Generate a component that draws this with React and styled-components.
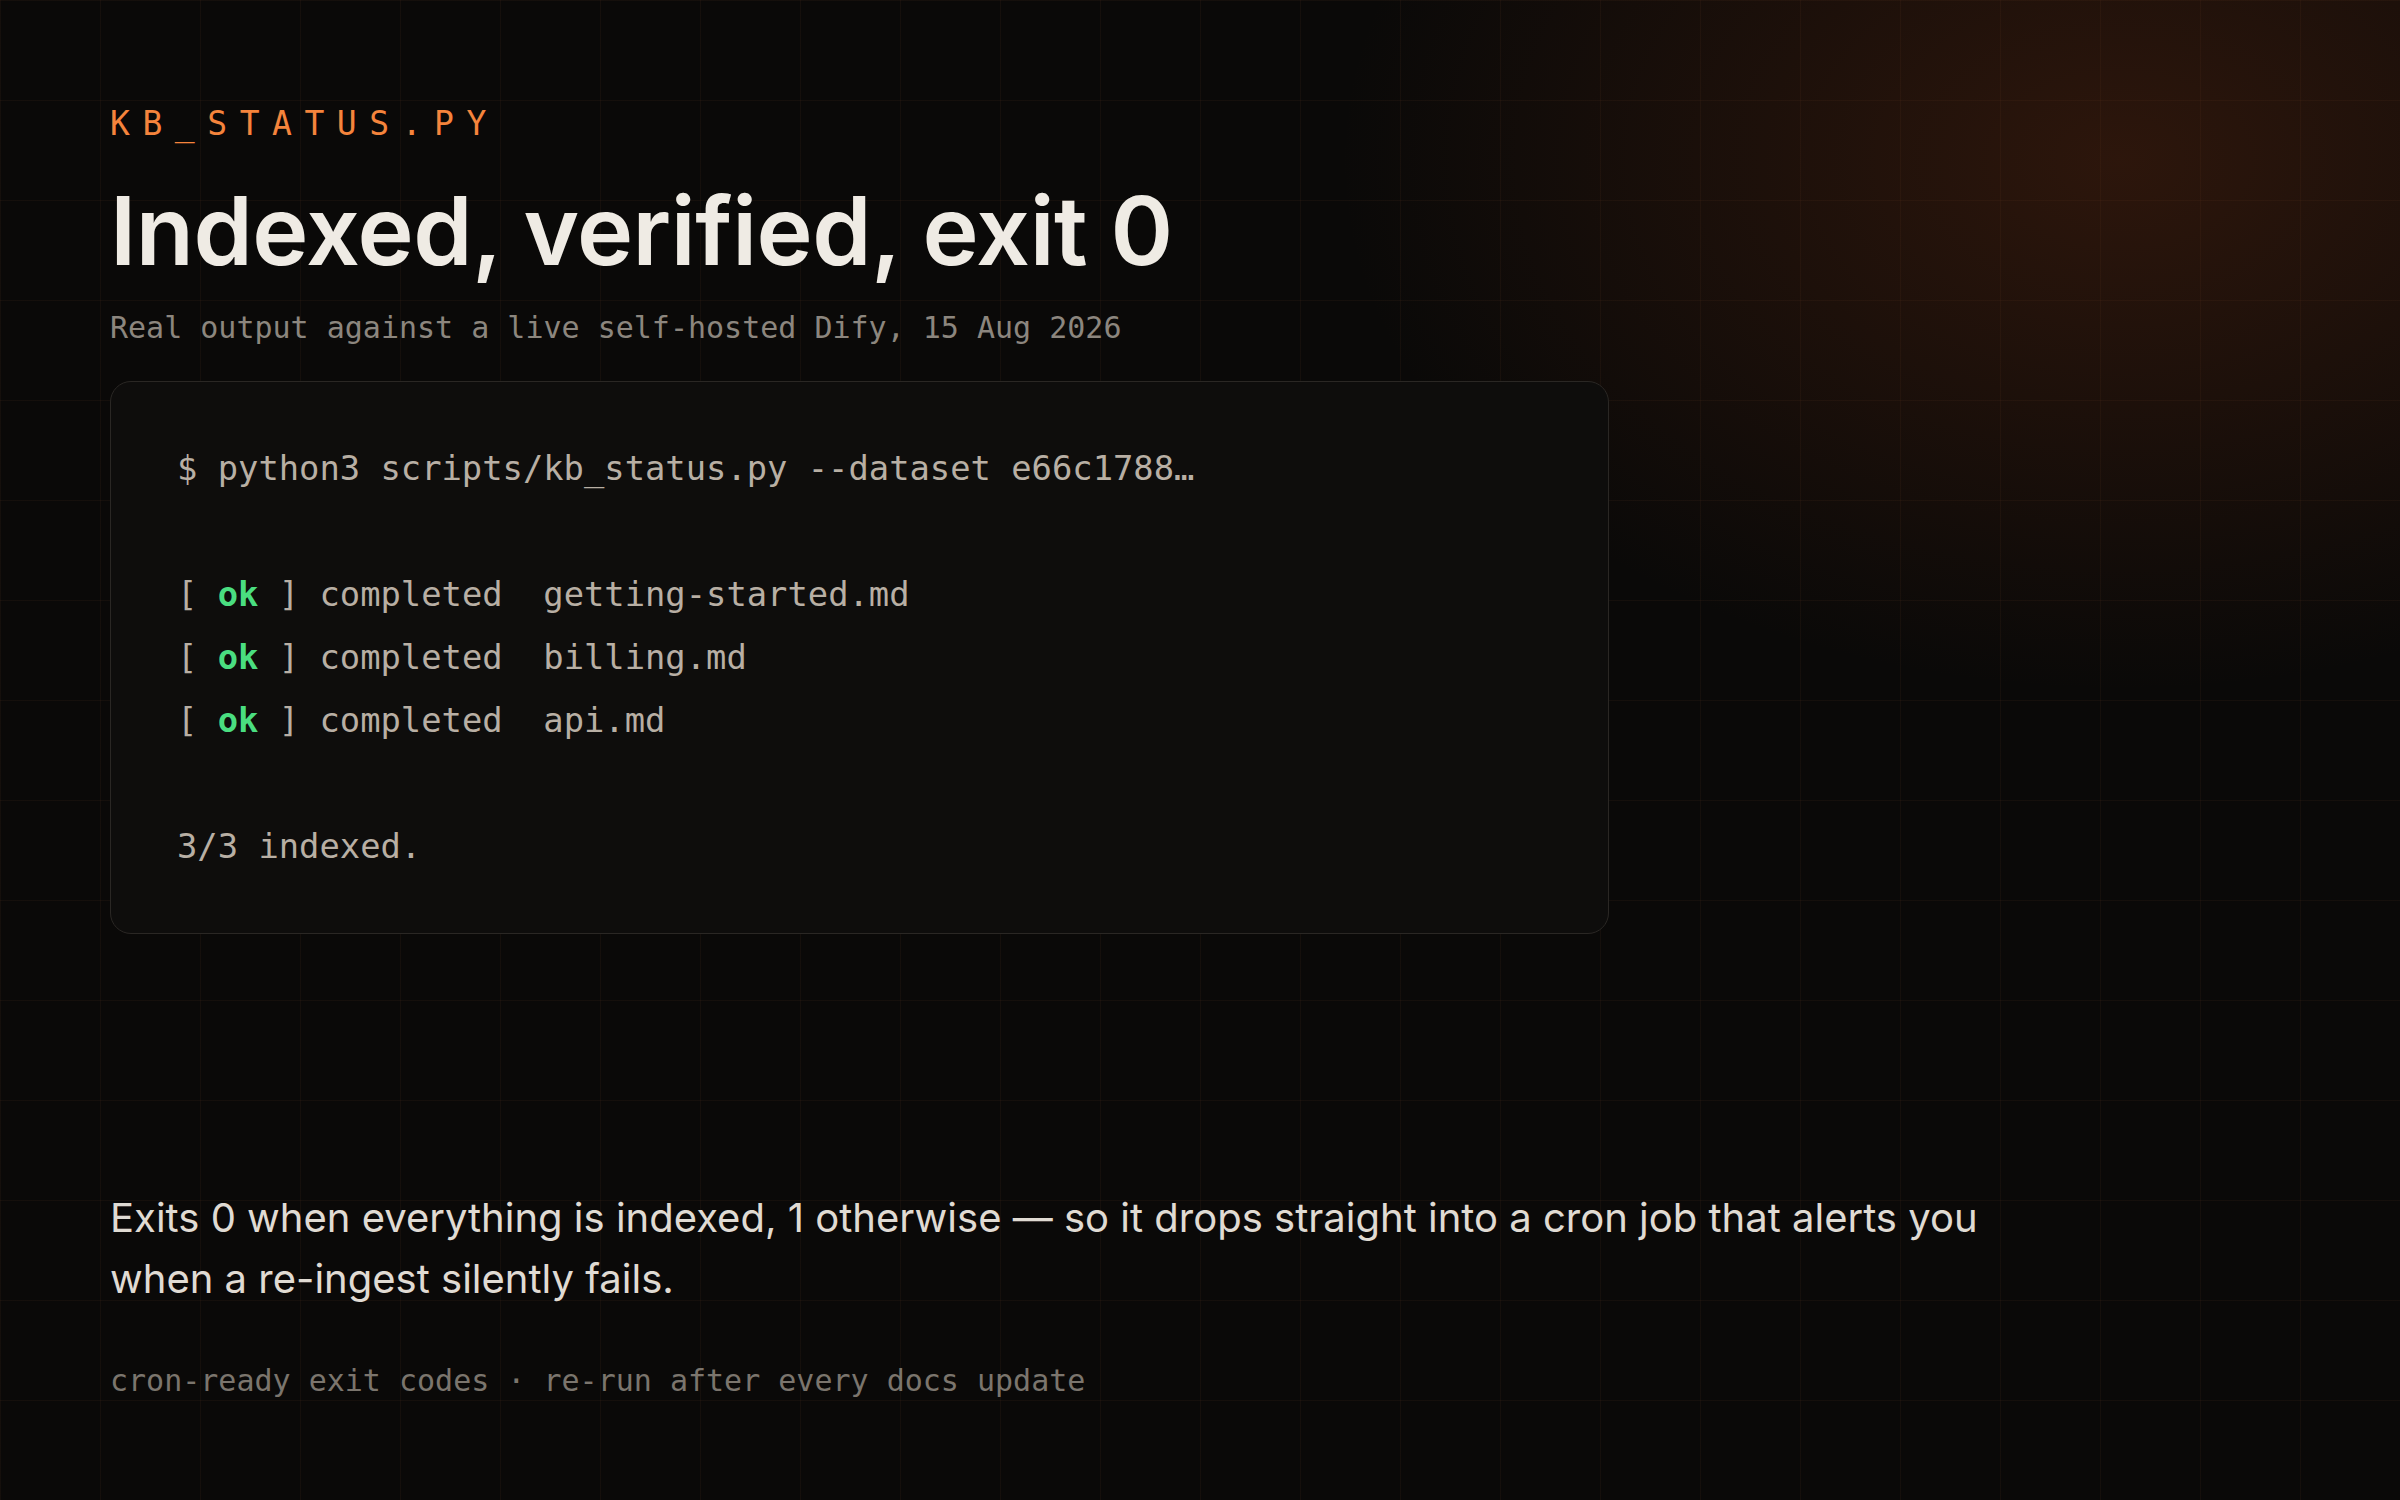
import React from 'react';
import styled, { createGlobalStyle } from 'styled-components';

const Colors = {
  page: '#0a0908',
  panel: '#0e0d0c',
  panelBorder: '#2a2724',
  title: '#efebe4',
  body: '#e0dbd3',
  accent: '#f5843c',
  muted: '#8c867e',
  faint: '#7b756d',
  term: '#b8afa4',
  ok: '#4ade80'
};

const Mono = '"DejaVu Sans Mono", "Liberation Mono", monospace';
const Sans = 'Inter, "Noto Sans", sans-serif';

const GlobalStyle = createGlobalStyle`
  html, body {
    margin: 0;
    padding: 0;
    background: ${Colors.page};
  }
  body {
    font-family: ${Sans};
    -webkit-font-smoothing: antialiased;
  }
`;

const Page = styled.main`
  box-sizing: border-box;
  min-height: 100vh;
  padding: 107px 110px 80px;
  display: flex;
  flex-direction: column;
  align-items: flex-start;
  background-color: ${Colors.page};
  background-image:
    radial-gradient(ellipse 1000px 680px at 2120px 160px, rgba(125, 52, 20, 0.3), rgba(125, 52, 20, 0.13) 45%, transparent 78%),
    linear-gradient(to right, rgba(255, 150, 90, 0.045) 1px, transparent 1px),
    linear-gradient(to bottom, rgba(255, 150, 90, 0.045) 1px, transparent 1px);
  background-size: 100% 100%, 100px 100px, 100px 100px;
`;

const Eyebrow = styled.div`
  font-family: ${Mono};
  font-size: 33px;
  line-height: 1;
  letter-spacing: 0.38em;
  color: ${Colors.accent};
`;

const Title = styled.h1`
  margin: 39px 0 0;
  font-family: ${Sans};
  font-size: 95px;
  font-weight: 600;
  line-height: 1.1;
  letter-spacing: -0.005em;
  color: ${Colors.title};
`;

const Caption = styled.p`
  margin: ${(props) => props.$top}px 0 0;
  font-family: ${Mono};
  font-size: 30px;
  line-height: 1.4;
  color: ${(props) => props.$color};
`;

const Terminal = styled.pre`
  box-sizing: border-box;
  width: 1499px;
  margin: 32px 0 0;
  padding: 55px 66px;
  background: ${Colors.panel};
  border: 1px solid ${Colors.panelBorder};
  border-radius: 21px;
  font-family: ${Mono};
  font-size: 33.8px;
  line-height: 63px;
  color: ${Colors.term};
  white-space: pre;
`;

const Ok = styled.span`
  color: ${Colors.ok};
  font-weight: 700;
`;

const Lead = styled.p`
  max-width: 1900px;
  margin: 253px 0 0;
  font-family: ${Sans};
  font-size: 40px;
  line-height: 61px;
  color: ${Colors.body};
`;

const files = ['getting-started.md', 'billing.md', 'api.md'];

export default function App() {
  return (
    <>
      <GlobalStyle />
      <Page>
        <Eyebrow>KB_STATUS.PY</Eyebrow>
        <Title>Indexed, verified, exit 0</Title>
        <Caption $top={23} $color={Colors.muted}>
          Real output against a live self-hosted Dify, 15 Aug 2026
        </Caption>
        <Terminal>
          {'$ python3 scripts/kb_status.py --dataset e66c1788…\n\n'}
          {files.map((file) => (
            <React.Fragment key={file}>
              {'[ '}<Ok>ok</Ok>{' ] completed  '}{file}{'\n'}
            </React.Fragment>
          ))}
          {'\n3/3 indexed.'}
        </Terminal>
        <Lead>
          Exits 0 when everything is indexed, 1 otherwise — so it drops straight into a cron job that alerts you when a re-ingest silently fails.
        </Lead>
        <Caption $top={51} $color={Colors.faint}>
          cron-ready exit codes · re-run after every docs update
        </Caption>
      </Page>
    </>
  );
}
